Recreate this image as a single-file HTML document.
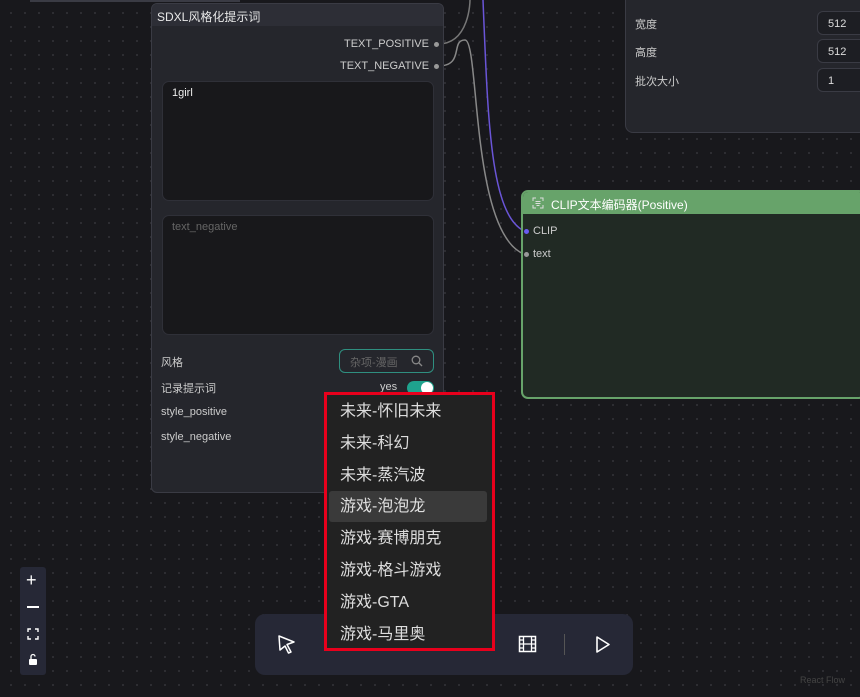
<!DOCTYPE html>
<html><head><meta charset="utf-8"><style>
*{box-sizing:border-box;margin:0;padding:0}
body{width:860px;height:697px;overflow:hidden;position:relative;background:#18181c;
background-image:radial-gradient(circle,#34343a 0.8px,transparent 1px);background-size:14px 14px;background-position:4px 6px;
font-family:"Liberation Sans","Noto Sans CJK SC",sans-serif;color:#ddd}
.abs{position:absolute}
.node{position:absolute;background:#25262c;border:1px solid #3a3b44;border-radius:6px;overflow:hidden}
.lbl{font-size:11px;color:#ccc;position:absolute}
.ta{position:absolute;background:#18181b;border:1px solid #2f3038;border-radius:7px;font-size:11px;padding:5px 9px}
.dot{position:absolute;width:5px;height:5px;border-radius:50%;background:#999}
.item{position:absolute;left:2px;width:158px;height:31px;font-size:16px;color:#ddd;padding-left:11px;line-height:31px;font-family:"Liberation Sans","Noto Sans CJK SC",sans-serif}
</style></head><body>
<div class="abs" style="left:30px;top:0;width:210px;height:2px;background:#3a3b44"></div>
<svg class="abs" style="left:0;top:0" width="860" height="697">
<path d="M483 0 C488 120,490 220,527 232" stroke="#6a55d8" stroke-width="1.5" fill="none"/>
<path d="M438 44 C470 44,470 0,470 0" stroke="#777" stroke-width="1.5" fill="none"/>
<path d="M438 66 C465 66,450 40,465 40 C480 40,470 240,527 255" stroke="#888" stroke-width="1.5" fill="none"/>
</svg>
<div class="node" style="left:151px;top:3px;width:293px;height:490px">
<div style="height:22px;background:#2d2e36;font-size:12px;color:#e8e8e8;padding:4px 5px">SDXL风格化提示词</div>
</div>
<div class="lbl" style="left:344px;top:38px">TEXT_POSITIVE</div><div class="dot" style="left:434px;top:42px"></div>
<div class="lbl" style="left:340px;top:60px">TEXT_NEGATIVE</div><div class="dot" style="left:434px;top:64px"></div>
<div class="ta" style="left:162px;top:81px;width:272px;height:120px;color:#eee">1girl</div>
<div class="ta" style="left:162px;top:215px;width:272px;height:120px;color:#666">text_negative</div>
<div class="lbl" style="left:161px;top:354px">风格</div>
<div class="abs" style="left:339px;top:349px;width:95px;height:24px;border:1px solid #2f8f80;border-radius:6px;font-size:11px;color:#666;padding:4px 10px">杂项-漫画
<svg class="abs" style="left:71px;top:5px" width="12" height="12"><circle cx="5" cy="5" r="3.8" stroke="#888" stroke-width="1.3" fill="none"/><path d="M8 8L11 11" stroke="#888" stroke-width="1.3"/></svg></div>
<div class="lbl" style="left:161px;top:380px">记录提示词</div>
<div class="lbl" style="left:380px;top:381px">yes</div>
<div class="abs" style="left:407px;top:381px;width:27px;height:14px;border-radius:7px;background:#1fa38e"><div class="abs" style="left:14px;top:1px;width:12px;height:12px;border-radius:50%;background:#fff"></div></div>
<div class="lbl" style="left:161px;top:406px">style_positive</div>
<div class="lbl" style="left:161px;top:431px">style_negative</div>
<div class="node" style="left:625px;top:-10px;width:250px;height:143px;border-radius:8px"></div>
<div class="lbl" style="left:635px;top:16px">宽度</div>
<div class="lbl" style="left:635px;top:44px">高度</div>
<div class="lbl" style="left:635px;top:73px">批次大小</div>
<div class="abs" style="left:817px;top:11px;width:60px;height:24px;border:1px solid #3a3b44;border-radius:6px;background:#1d1e23;font-size:11px;padding:6px 10px">512</div>
<div class="abs" style="left:817px;top:39px;width:60px;height:24px;border:1px solid #3a3b44;border-radius:6px;background:#1d1e23;font-size:11px;padding:6px 10px">512</div>
<div class="abs" style="left:817px;top:68px;width:60px;height:24px;border:1px solid #3a3b44;border-radius:6px;background:#1d1e23;font-size:11px;padding:6px 10px">1</div>
<div class="abs" style="left:521px;top:190px;width:345px;height:209px;border:2px solid #67a36a;border-radius:7px;background:#212a24;overflow:hidden">
<div style="height:22px;background:#67a36a;font-size:12px;color:#fff;padding:4px 0 0 28px">CLIP文本编码器(Positive)</div>
<svg class="abs" style="left:9px;top:5px" width="12" height="12"><path d="M1 4V1H4M8 1H11V4M11 8V11H8M4 11H1V8M3.5 4.5H8.5M3.5 6.5H8.5M4.5 8.5H7.5" stroke="#ddd" stroke-width="1" fill="none"/></svg>
</div>
<div class="dot" style="left:524px;top:229px;background:#6a5cf0"></div><div class="lbl" style="left:533px;top:225px">CLIP</div>
<div class="dot" style="left:524px;top:252px"></div><div class="lbl" style="left:533px;top:248px">text</div>
<div class="lbl" style="left:800px;top:675px;font-size:9px;color:#444">React Flow</div>
<div class="abs" style="left:20px;top:567px;width:26px;height:108px;background:#262836;border-radius:3px;color:#fff">
<div class="abs" style="left:6px;top:5px;font-size:18px;line-height:16px">+</div>
<div class="abs" style="left:7px;top:39px;width:12px;height:1.5px;background:#fff"></div>
<svg class="abs" style="left:7px;top:61px" width="12" height="12"><path d="M1 4V1H4M8 1H11V4M11 8V11H8M4 11H1V8" stroke="#fff" stroke-width="1.4" fill="none"/></svg>
<svg class="abs" style="left:8px;top:86px" width="10" height="13"><path d="M3 6V3.5A2 2 0 0 1 7 3.5" stroke="#fff" stroke-width="1.3" fill="none"/><rect x="1" y="6" width="8" height="6" rx="1" fill="#fff"/></svg>
</div>
<div class="abs" style="left:255px;top:614px;width:378px;height:61px;background:#262836;border-radius:10px"></div>
<svg class="abs" style="left:277px;top:634px" width="20" height="22"><path d="M2 2L17 8L10 10.5L14 18L11.5 19L8 12L3 16Z" stroke="#fff" stroke-width="1.5" fill="none" stroke-linejoin="round"/></svg>
<svg class="abs" style="left:518px;top:635px" width="20" height="19"><rect x="1.5" y="1.5" width="16" height="15" stroke="#fff" stroke-width="1.5" fill="none"/><path d="M5.5 1.5V16.5M13.5 1.5V16.5M1.5 9H17.5M1.5 5H5.5M1.5 13H5.5M13.5 5H17.5M13.5 13H17.5" stroke="#fff" stroke-width="1.3"/></svg>
<div class="abs" style="left:564px;top:634px;width:1px;height:21px;background:#555"></div>
<svg class="abs" style="left:595px;top:635px" width="16" height="19"><path d="M2 2L14 9.5L2 17Z" stroke="#fff" stroke-width="1.6" fill="none" stroke-linejoin="round"/></svg>
<div class="abs" style="left:324px;top:392px;width:171px;height:259px;border:3px solid #e8001c;background:#222;overflow:hidden">
<div class="item" style="top:1px">未来-怀旧未来</div>
<div class="item" style="top:33px">未来-科幻</div>
<div class="item" style="top:65px">未来-蒸汽波</div>
<div class="item" style="top:96px;background:#3a3a3a;border-radius:3px">游戏-泡泡龙</div>
<div class="item" style="top:128px">游戏-赛博朋克</div>
<div class="item" style="top:160px">游戏-格斗游戏</div>
<div class="item" style="top:192px">游戏-GTA</div>
<div class="item" style="top:224px">游戏-马里奥</div>
</div>
</body></html>
